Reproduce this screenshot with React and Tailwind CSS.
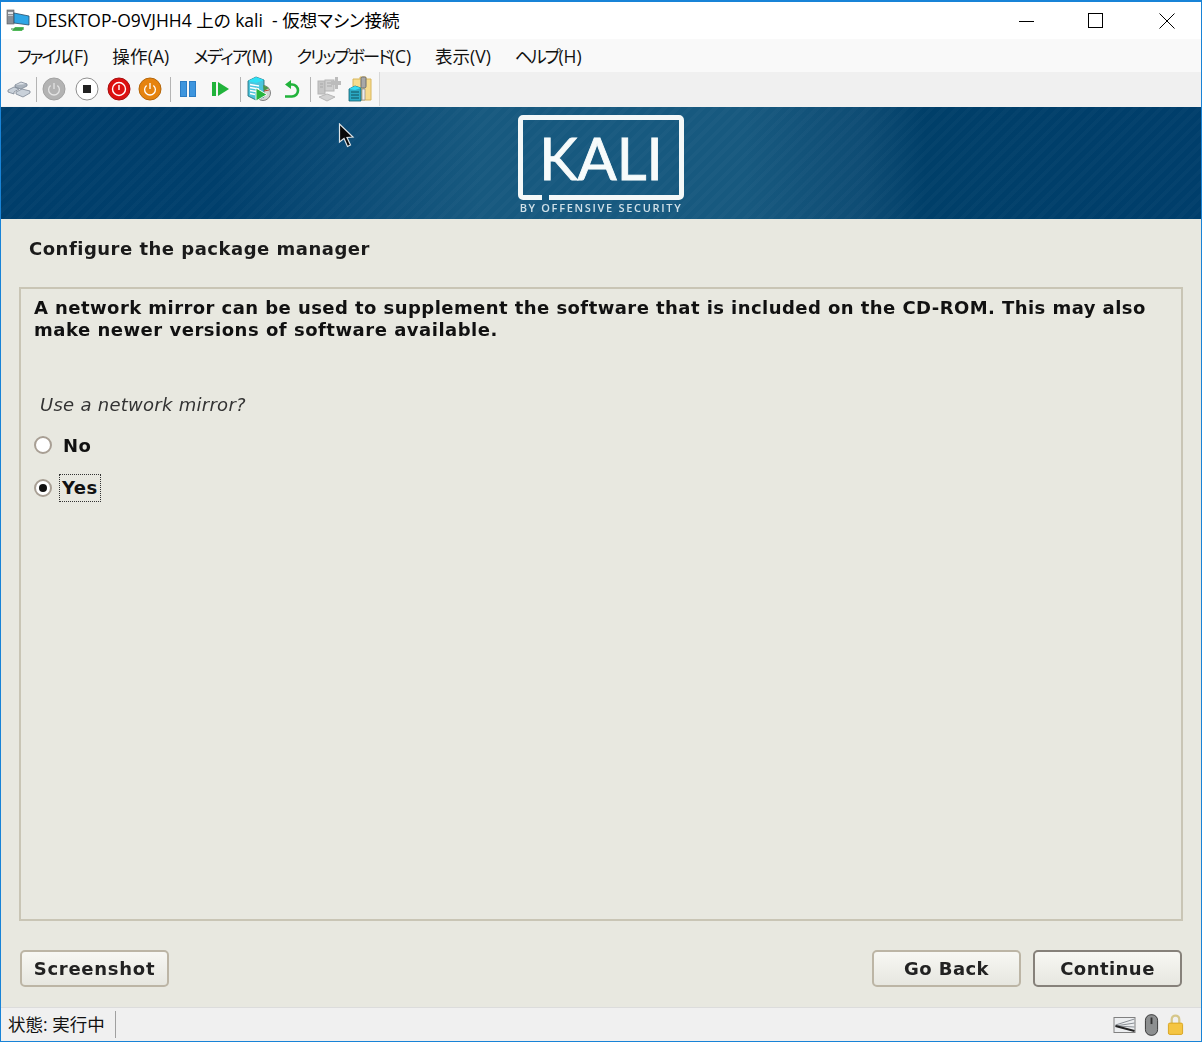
import React from 'react';

const uiFont = { fontFamily: '"Open Sans", "Noto Sans CJK JP", sans-serif' };

const menus = [
  { label: 'ファイル', hotkey: '(F)', className: 'tracking-[-2.2px]' },
  { label: '操作', hotkey: '(A)', className: 'tracking-[0.3px]' },
  { label: 'メディア', hotkey: '(M)', className: 'tracking-[-1.75px]' },
  { label: 'クリップボード', hotkey: '(C)', className: 'tracking-[-2.1px]' },
  { label: '表示', hotkey: '(V)', className: 'tracking-[0px]' },
  { label: 'ヘルプ', hotkey: '(H)', className: 'tracking-[-2.2px]' },
];

const AppIcon = () => (
  <svg width="24" height="24" viewBox="0 0 24 24" className="shrink-0">
    <rect x="1" y="1" width="7" height="14" fill="#8a8f96" stroke="#55595e" strokeWidth="0.6" />
    <rect x="2" y="3" width="5" height="2" fill="#e2e5e8" />
    <rect x="2" y="6" width="5" height="1" fill="#c4c8cc" />
    <path d="M8 4 L23 7 V16 L8 14 Z" fill="#2ea6e6" stroke="#2b4f68" strokeWidth="0.8" />
    <path d="M11 18 L18 18 L16 22 L6 22 L9 18 Z" fill="#52b95a" />
    <path d="M5 20 H18" stroke="#2d8f3a" strokeWidth="1" />
  </svg>
);

const KeysIcon = () => (
  <svg width="24" height="18" viewBox="0 0 24 18">
    <path d="M1 10 L7 7 L12 9 L7 12 V14 L1 12 Z" fill="#c9d1da" stroke="#7c8794" strokeWidth="0.8" />
    <path d="M8 5 L14 2 L20 4 L14 7 Z" fill="#dde2e8" stroke="#7c8794" strokeWidth="0.8" />
    <path d="M8 5 V7 L14 9 L20 6 V4" fill="#aab3bd" stroke="#7c8794" strokeWidth="0.8" />
    <path d="M9 12 L15 9 L23 11 V13 L16 17 L9 14 Z" fill="#c9d1da" stroke="#7c8794" strokeWidth="0.8" />
  </svg>
);

const PowerRound = ({ bg, ring, stroke }) => (
  <svg width="24" height="24" viewBox="0 0 24 24">
    <circle cx="12" cy="12" r="11" fill={bg} stroke={ring} />
    <path d="M8.6 8.4 A5.4 5.4 0 1 0 15.4 8.4" fill="none" stroke={stroke} strokeWidth="1.3" />
    <path d="M12 6 V12" stroke={stroke} strokeWidth="1.3" />
  </svg>
);

const StopIcon = () => (
  <svg width="24" height="24" viewBox="0 0 24 24">
    <circle cx="12" cy="12" r="11" fill="#fff" stroke="#8f8f8f" />
    <rect x="8" y="8" width="8" height="8" fill="#222" />
  </svg>
);

const ResetIcon = () => (
  <svg width="24" height="24" viewBox="0 0 24 24">
    <circle cx="12" cy="12" r="11" fill="#dd1010" stroke="#a61010" />
    <circle cx="12" cy="12" r="6.5" fill="none" stroke="#fff" strokeWidth="1.4" />
    <path d="M12 8 V13" stroke="#fff" strokeWidth="1.4" />
  </svg>
);

const PauseIcon = () => (
  <svg width="16" height="16" viewBox="0 0 16 16">
    <rect x="0.5" y="0.5" width="6" height="15" fill="#3d95de" stroke="#2b7cc4" />
    <rect x="9.5" y="0.5" width="6" height="15" fill="#3d95de" stroke="#2b7cc4" />
  </svg>
);

const ResumeIcon = () => (
  <svg width="18" height="16" viewBox="0 0 18 16">
    <rect x="0" y="1" width="4" height="14" fill="#21b33b" />
    <path d="M6 1 L17 8 L6 15 Z" fill="#21b33b" />
  </svg>
);

const CheckpointIcon = () => (
  <svg width="24" height="26" viewBox="0 0 24 26">
    <circle cx="16" cy="17" r="7.5" fill="#d4d4d4" stroke="#808080" />
    <path d="M1 5 L9 1 L17 4 V21 L9 24 L1 20 Z" fill="#4cc4dc" stroke="#1d6472" strokeWidth="0.8" />
    <path d="M1 5 L9 1 L17 4 L9 7 Z" fill="#2fe0f4" />
    <path d="M3 8.5 L12 10 M3 11.5 L12 13 M3 14.5 L12 16 M3 17.5 L8 18.5" stroke="#fff" strokeWidth="1.3" />
    <path d="M9 12 L20 18.5 L9 25 Z" fill="#26b53e" stroke="#fff" strokeWidth="0.9" />
    <path d="M16 9 L22 12 L17 15 Z" fill="#4f9748" />
    <path d="M17 15 L22 14" stroke="#c04a30" strokeWidth="1" />
  </svg>
);

const RevertIcon = () => (
  <svg width="16" height="20" viewBox="0 0 16 20">
    <path d="M7 1 L1 5.5 L7 10 Z" fill="#21b33b" />
    <path d="M5 5.5 H8 A5.7 5.7 0 0 1 8 17.5 H1" fill="none" stroke="#21b33b" strokeWidth="2.6" />
  </svg>
);

const ShareIcon = () => (
  <svg width="24" height="26" viewBox="0 0 24 26">
    <rect x="1" y="5" width="7" height="13" fill="#c6c6c6" stroke="#b4b4b4" />
    <rect x="8" y="4" width="9" height="11" fill="#d0d0d0" stroke="#b4b4b4" />
    <path d="M3 8 H6 M3 11 H6 M10 7 H15 M10 10 H15" stroke="#a8a8a8" />
    <path d="M14 5 H18 V1 H21 V5 H24 V9 H21 V13 H18 V9 H14 Z" fill="#bcbcbc" />
    <path d="M2 21 L10 18 L18 21 L10 25 Z" fill="#d2d2d2" stroke="#b8b8b8" />
  </svg>
);

const ZipIcon = () => (
  <svg width="24" height="26" viewBox="0 0 24 26">
    <path d="M5 3 H12 V1 H18 V3 H23 V24 H5 Z" fill="#f7dc8e" stroke="#d8b65c" />
    <rect x="13" y="1" width="5" height="11" rx="1.5" fill="#a8a8a8" stroke="#6f6f6f" />
    <path d="M14 13 H17 V24 H14 Z" fill="#ececec" stroke="#8a8a8a" strokeWidth="0.7" />
    <path d="M1 13 L7 10 L13 12 V25 H1 Z" fill="#2ba9c4" stroke="#155f70" strokeWidth="0.8" />
    <path d="M1 13 L7 10 L13 12 L7 14 Z" fill="#35dcf4" />
    <path d="M3 16 H11 M3 19 H11 M3 22 H11" stroke="#12505e" strokeWidth="1" />
  </svg>
);

const Cursor = () => (
  <svg width="18" height="26" viewBox="0 0 18 26" className="absolute left-[337px] top-[16px]">
    <path d="M1.5 1 L1.5 19 L6 15.5 L9.5 23.5 L12.5 22 L9 14.5 L15 14 Z" fill="#0a0a0a" stroke="#dfe5e8" strokeWidth="1.2" />
  </svg>
);

const Sep = () => <div className="w-px h-[25px] bg-[#b4b4b4]" />;

const ToolSlot = ({ className, children }) => (
  <div className={`flex items-center justify-center ${className}`}>{children}</div>
);

const Button = ({ label, strong, tight }) => (
  <button
    className={`w-[149px] h-[37px] rounded-[5px] border-2 bg-linear-to-b from-[#f7f7f3] to-[#e7e7e0] font-bold text-[18px] text-[#222] blur-[0.25px] ${tight ? 'tracking-[0.45px]' : 'tracking-[0.72px]'} ${strong ? 'border-[#86817a]' : 'border-[#bcb5a5]'}`}
  >
    {label}
  </button>
);

export default function App() {
  return (
    <div className="w-[1202px] h-[1042px] flex flex-col border border-t-2 border-[#1883d7] bg-white overflow-hidden" style={uiFont}>
      <div className="h-[37px] flex items-center bg-white shrink-0">
        <div className="ml-[5px] mr-[5px]"><AppIcon /></div>
        <span className="text-[17.5px] text-black whitespace-pre [font-feature-settings:'palt']">DESKTOP-O9VJHH4 上の kali  - 仮想マシン接続</span>
        <div className="ml-auto flex items-center">
          <svg width="16" height="16" viewBox="0 0 16 16" className="mr-[53px]"><path d="M0 8.5 H15" stroke="#000" /></svg>
          <svg width="16" height="16" viewBox="0 0 16 16" className="mr-[55px]"><rect x="0.5" y="0.5" width="14" height="14" fill="none" stroke="#000" /></svg>
          <svg width="16" height="16" viewBox="0 0 16 16" className="mr-[26px]"><path d="M0.5 0.5 L15.5 15.5 M15.5 0.5 L0.5 15.5" stroke="#000" /></svg>
        </div>
      </div>

      <div className="h-[33px] flex items-center gap-[24px] pl-[16px] pt-[2px] bg-[#f9f9f9] shrink-0 text-[17.5px] text-[#111] [font-feature-settings:'palt']">
        {menus.map((m) => (
          <span key={m.label}>
            <span className={m.className}>{m.label}</span>{m.hotkey}
          </span>
        ))}
      </div>

      <div className="h-[35px] flex bg-[#f0f0f0] shrink-0">
        <div className="w-[379px] h-[34px] flex items-center bg-[#f7f7f7] border-r border-[#d8d8d8]">
          <ToolSlot className="w-[35px]"><KeysIcon /></ToolSlot>
          <Sep />
          <ToolSlot className="w-[33px]"><PowerRound bg="#b3b3b3" ring="#a2a2a2" stroke="#e4e4e4" /></ToolSlot>
          <ToolSlot className="w-[33px]"><StopIcon /></ToolSlot>
          <ToolSlot className="w-[31px]"><ResetIcon /></ToolSlot>
          <ToolSlot className="w-[32px]"><PowerRound bg="#e6830e" ring="#b5670c" stroke="#fff" /></ToolSlot>
          <ToolSlot className="w-[4px]"><span /></ToolSlot>
          <Sep />
          <ToolSlot className="w-[34px]"><PauseIcon /></ToolSlot>
          <ToolSlot className="w-[32px]"><ResumeIcon /></ToolSlot>
          <ToolSlot className="w-[3px]"><span /></ToolSlot>
          <Sep />
          <ToolSlot className="w-[36px]"><CheckpointIcon /></ToolSlot>
          <ToolSlot className="w-[29px]"><RevertIcon /></ToolSlot>
          <ToolSlot className="w-[4px]"><span /></ToolSlot>
          <Sep />
          <ToolSlot className="w-[36px]"><ShareIcon /></ToolSlot>
          <ToolSlot className="w-[26px]"><ZipIcon /></ToolSlot>
        </div>
      </div>

      <div className="relative h-[112px] shrink-0 flex flex-col items-center pt-[8px] overflow-hidden bg-[repeating-linear-gradient(135deg,rgba(255,255,255,0.018)_0px,rgba(255,255,255,0.018)_4px,transparent_4px,transparent_9px),linear-gradient(90deg,#003e6b_0%,#003f6c_18%,#0b4b76_28%,#17597f_40%,#17597f_62%,#0e4c74_72%,#003f69_77%,#003e6b_100%)]">
        <Cursor />
        <div className="relative w-[166px] h-[85px] border-[5px] border-[#f4f8f8] rounded-[5px] flex items-center justify-center blur-[0.4px]">
          <span className="text-[#f7fbfb] text-[58px] leading-none [-webkit-text-stroke:0.9px_#f7fbfb]" style={{ fontFamily: 'Lato, sans-serif' }}>KALI</span>
          <div className="absolute left-[19px] -bottom-[5px] w-[7px] h-[5px] bg-[#17597f]" />
        </div>
        <div className="mt-[1px] text-[11px] font-semibold tracking-[1.68px] text-[#cfe0e8] leading-[13px] blur-[0.3px]" style={{ fontFamily: '"Open Sans", sans-serif' }}>
          BY OFFENSIVE SECURITY
        </div>
      </div>

      <div className="flex-1 flex flex-col bg-[#e8e8e0] text-[#111] min-h-0" style={{ fontFamily: '"DejaVu Sans", sans-serif' }}>
        <h1 className="pl-[28px] pt-[17px] text-[18px] font-bold tracking-[0.5px] leading-[26px] text-[#1a1a1a] blur-[0.3px]">Configure the package manager</h1>
        <div className="mx-[18px] mt-[25px] flex-1 border-2 border-[#c9c5b5] px-[13px] pt-[8px]">
          <p className="text-[18px] font-bold tracking-[0.44px] leading-[22px] whitespace-nowrap blur-[0.3px]">
            A network mirror can be used to supplement the software that is included on the CD-ROM. This may also
            <br />
            <span className="tracking-[0.51px]">make newer versions of software available.</span>
          </p>
          <p className="mt-[52px] ml-[6px] text-[18px] italic tracking-[0.27px] leading-[24px] text-[#333] blur-[0.3px]">Use a network mirror?</p>
          <div className="mt-[16px] flex items-center h-[24px]">
            <span className="w-[18px] h-[18px] rounded-full border-2 border-[#a89f94] bg-white blur-[0.3px]" />
            <span className="ml-[11px] text-[18px] font-bold tracking-[0.5px] blur-[0.3px]">No</span>
          </div>
          <div className="mt-[19px] flex items-center h-[24px]">
            <span className="w-[18px] h-[18px] rounded-full border-2 border-[#a89f94] bg-white flex items-center justify-center blur-[0.3px]">
              <span className="w-[8px] h-[8px] rounded-full bg-[#111]" />
            </span>
            <span className="ml-[7px] px-[2px] h-[28px] leading-[25px] border border-dotted border-[#333] text-[18px] font-bold tracking-[0.4px]">Yes</span>
          </div>
        </div>
        <div className="h-[86px] shrink-0 flex items-start pt-[29px] pl-[19px] pr-[19px]">
          <Button label="Screenshot" />
          <div className="ml-auto flex gap-[12px]">
            <Button label="Go Back" tight />
            <Button label="Continue" strong tight />
          </div>
        </div>
      </div>

      <div className="h-[34px] shrink-0 flex items-center bg-[#f0f0f0] border-t border-[#dcdcdc]">
        <span className="ml-[7px] text-[17.5px] text-[#111]">状態: 実行中</span>
        <div className="ml-[10px] w-px h-[27px] bg-[#a0a0a0]" />
        <div className="ml-auto mr-[17px] flex items-center gap-[8px]">
          <svg width="23" height="20" viewBox="0 0 22 20">
            <rect x="0.5" y="2.5" width="21" height="15" fill="#eceef0" stroke="#808080" />
            <path d="M2 10 L21 4 M2 11 L21 8 M2 11 L21 12" stroke="#8a8f95" />
            <path d="M2 11 L21 16" stroke="#222" strokeWidth="2" />
          </svg>
          <svg width="15" height="24" viewBox="0 0 16 24">
            <rect x="1.5" y="1" width="13" height="22" rx="6" fill="#8d8f90" stroke="#333" />
            <rect x="7" y="4" width="2" height="7" fill="#333" />
          </svg>
          <svg width="17" height="24" viewBox="0 0 18 24">
            <path d="M5 11 V6 A4 4 0 0 1 13 6 V11" fill="none" stroke="#d6c78a" strokeWidth="2.4" />
            <rect x="1.5" y="10" width="15" height="12" rx="1.5" fill="#f5c542" stroke="#d9a520" />
          </svg>
        </div>
      </div>
    </div>
  );
}
